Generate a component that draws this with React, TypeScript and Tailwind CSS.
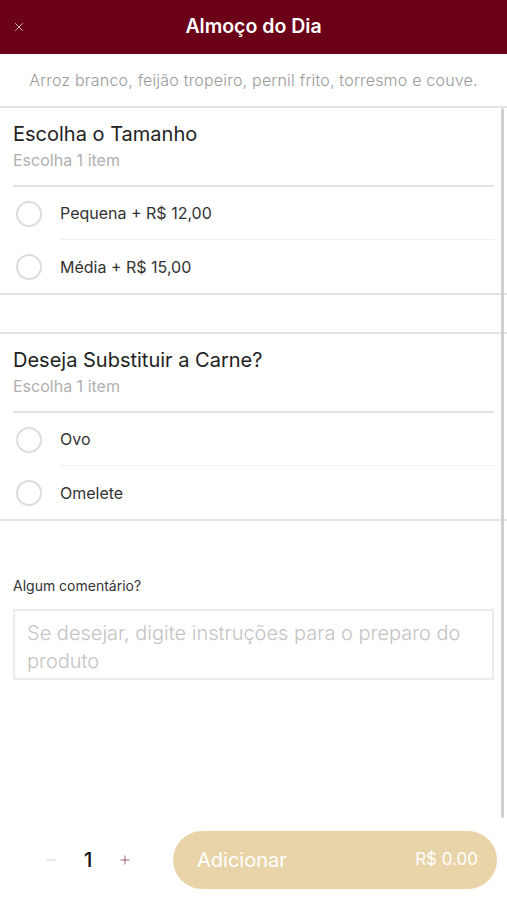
import { X, Minus, Plus } from 'lucide-react';

const sections = [
  { title: 'Escolha o Tamanho', options: ['Pequena + R$ 12,00', 'Média + R$ 15,00'] },
  { title: 'Deseja Substituir a Carne?', options: ['Ovo', 'Omelete'] },
];

const Section = ({ title, options }: { title: string; options: string[] }) => (
  <div className="border-b-2 border-[#e4e4e4]">
    <div className="px-[13px] pt-[12px]">
      <h2 className="text-[20px] leading-[28px] text-[#222]">{title}</h2>
      <p className="text-[16px] leading-[24px] text-[#b0b0b0]">Escolha 1 item</p>
      <div className="mt-[13px] h-[2px] bg-[#e4e4e4]" />
    </div>
    {options.map((opt, i) => (
      <div key={opt} className="flex items-center h-[53px] pl-[16px] pr-[13px]">
        <span className="w-[26px] h-[26px] rounded-full border-2 border-[#dcdcdc] shrink-0" />
        <div
          className={`ml-[18px] flex-1 h-full flex items-center text-[16px] text-[#333] ${
            i < options.length - 1 ? 'border-b border-[#f0f0f0]' : ''
          }`}
        >
          {opt}
        </div>
      </div>
    ))}
  </div>
);

export default function App() {
  return (
    <div
      className="relative w-[507px] h-[900px] bg-white overflow-hidden flex flex-col"
      style={{ fontFamily: 'Inter, "Noto Sans", sans-serif' }}
    >
      {/* Header */}
      <div className="h-[54px] bg-[#6b0019] flex items-center relative shrink-0">
        <X className="absolute left-[12px] text-white/80" size={14} strokeWidth={1.5} />
        <h1 className="w-full text-center text-white text-[19.5px] font-semibold">Almoço do Dia</h1>
      </div>

      {/* Description */}
      <div className="h-[54px] flex items-center justify-center border-b-2 border-[#e4e4e4] shrink-0">
        <p className="text-[16px] tracking-[0.2px] text-[#9a9a9a] font-light">
          Arroz branco, feijão tropeiro, pernil frito, torresmo e couve.
        </p>
      </div>

      <Section {...sections[0]} />
      <div className="h-[39px] border-b-2 border-[#e4e4e4]" />
      <Section {...sections[1]} />

      {/* Comment */}
      <div className="px-[13px] pt-[52px]">
        <label className="text-[14px] text-[#333]">Algum comentário?</label>
        <div className="mt-[12px] h-[71px] border-2 border-[#ececec] px-[12px] pt-[8px] text-[20px] leading-[28px] text-[#c4c4c4] font-light">
          Se desejar, digite instruções para o preparo do produto
        </div>
      </div>

      <div className="flex-1" />

      {/* Footer */}
      <div className="flex items-center h-[58px] mb-[11px] pl-[44px] pr-[10px]">
        <Minus size={14} strokeWidth={1.2} className="text-[#bdbdbd]" />
        <span className="ml-[26px] text-[20px] font-medium text-[#111]">1</span>
        <Plus size={14} strokeWidth={1.2} className="ml-[26px] text-[#7a2638]" />
        <button className="ml-auto w-[324px] h-[58px] rounded-full bg-[#e8d4a8] flex items-center justify-between pl-[24px] pr-[19px] text-white">
          <span className="text-[20px]">Adicionar</span>
          <span className="text-[17px]">R$ 0.00</span>
        </button>
      </div>

      {/* Scrollbar */}
      <div className="absolute right-[3px] top-[108px] w-[3px] h-[710px] bg-[#cfcfcf] rounded-full" />
    </div>
  );
}
